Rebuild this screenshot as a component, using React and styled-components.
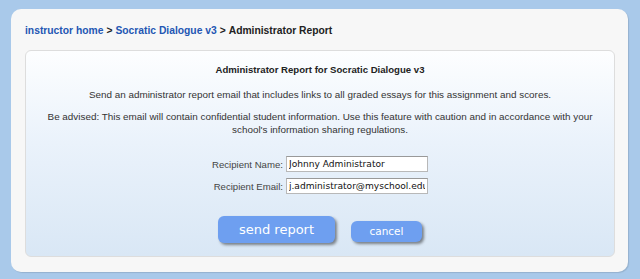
import React, { useState } from "react";
import styled, { createGlobalStyle } from "styled-components";

const GlobalStyle = createGlobalStyle`
    html, body {
        margin: 0;
        padding: 0;
        background-color: #a9c9ea;
    }
`;

const Page = styled.div`
    width: 640px;
    height: 279px;
    box-sizing: border-box;
    padding: 9px 12px 7px 11px;
    font-family: "Liberation Sans", Arial, sans-serif;
`;

const Panel = styled.div`
    height: 100%;
    box-sizing: border-box;
    background-color: #f7f7f7;
    border-radius: 10px;
    box-shadow: 1px 1px 1px rgba(0, 0, 0, 0.12);
    padding: 0 13px 15px 14px;
    display: flex;
    flex-direction: column;
`;

const Breadcrumb = styled.div`
    height: 40px;
    display: flex;
    align-items: center;
    font-size: 10.3px;
    font-weight: bold;
    color: #222;
    padding-top: 1px;
`;

const Crumb = styled.a`
    color: #2356b3;
    text-decoration: none;
`;

const Sep = styled.span`
    margin: 0 3px;
`;

const Card = styled.div`
    flex: 1;
    border: 1px solid #dddddd;
    border-radius: 6px;
    background: linear-gradient(to bottom, #fdfeff 0%, #eaf2fb 45%, #d9e7f5 100%);
    padding: 12px 17px 0 17px;
    display: flex;
    flex-direction: column;
    align-items: center;
`;

const Title = styled.h1`
    margin: 0;
    font-size: 9.6px;
    font-weight: bold;
    color: #222;
    line-height: 14px;
`;

const Text = styled.p`
    margin: ${(p) => p.$top}px 0 0 0;
    font-size: 9.9px;
    line-height: 13px;
    color: #333;
    text-align: center;
`;

const FormGrid = styled.div`
    margin-top: 20px;
    display: grid;
    grid-template-columns: auto auto;
    column-gap: 3px;
    row-gap: 6px;
    align-items: center;
`;

const Label = styled.label`
    font-size: 9.6px;
    color: #444;
    text-align: right;
`;

const Input = styled.input`
    width: 142px;
    height: 16px;
    box-sizing: border-box;
    margin: 0;
    padding: 0 2px;
    border: 1px solid #b8b8b8;
    border-top-color: #999;
    background: #fff;
    font-family: "DejaVu Sans", Verdana, sans-serif;
    font-size: 9.1px;
    color: #111;
    outline: none;
`;

const Buttons = styled.div`
    margin-top: 22px;
    display: flex;
    align-items: center;
    gap: 16px;
`;

const Button = styled.button`
    width: ${(p) => (p.$big ? 117 : 71)}px;
    height: ${(p) => (p.$big ? 27 : 21)}px;
    margin-top: ${(p) => (p.$big ? 0 : 3)}px;
    border: none;
    border-radius: 6px;
    background-color: #6e9ff0;
    color: #fff;
    font-family: "DejaVu Sans", Verdana, sans-serif;
    font-size: ${(p) => (p.$big ? 13 : 10.5)}px;
    box-shadow: 2px 2px 3px rgba(0, 0, 0, 0.45);
    cursor: pointer;
    padding: 0;
`;

export default function App() {
    const [name, setName] = useState("Johnny Administrator");
    const [email, setEmail] = useState("j.administrator@myschool.edu");

    return (
        <>
            <GlobalStyle />
            <Page>
                <Panel>
                    <Breadcrumb>
                        <Crumb href="#">instructor home</Crumb>
                        <Sep>&gt;</Sep>
                        <Crumb href="#">Socratic Dialogue v3</Crumb>
                        <Sep>&gt;</Sep>
                        <span>Administrator Report</span>
                    </Breadcrumb>
                    <Card>
                        <Title>Administrator Report for Socratic Dialogue v3</Title>
                        <Text $top={11}>
                            Send an administrator report email that includes links to all graded essays for this assignment and scores.
                        </Text>
                        <Text $top={9}>
                            Be advised: This email will contain confidential student information. Use this feature with caution and in accordance with your school's information sharing regulations.
                        </Text>
                        <FormGrid>
                            <Label htmlFor="recipient-name">Recipient Name:</Label>
                            <Input id="recipient-name" value={name} onChange={(e) => setName(e.target.value)} />
                            <Label htmlFor="recipient-email">Recipient Email:</Label>
                            <Input id="recipient-email" value={email} onChange={(e) => setEmail(e.target.value)} />
                        </FormGrid>
                        <Buttons>
                            <Button $big type="button">send report</Button>
                            <Button type="button">cancel</Button>
                        </Buttons>
                    </Card>
                </Panel>
            </Page>
        </>
    );
}
